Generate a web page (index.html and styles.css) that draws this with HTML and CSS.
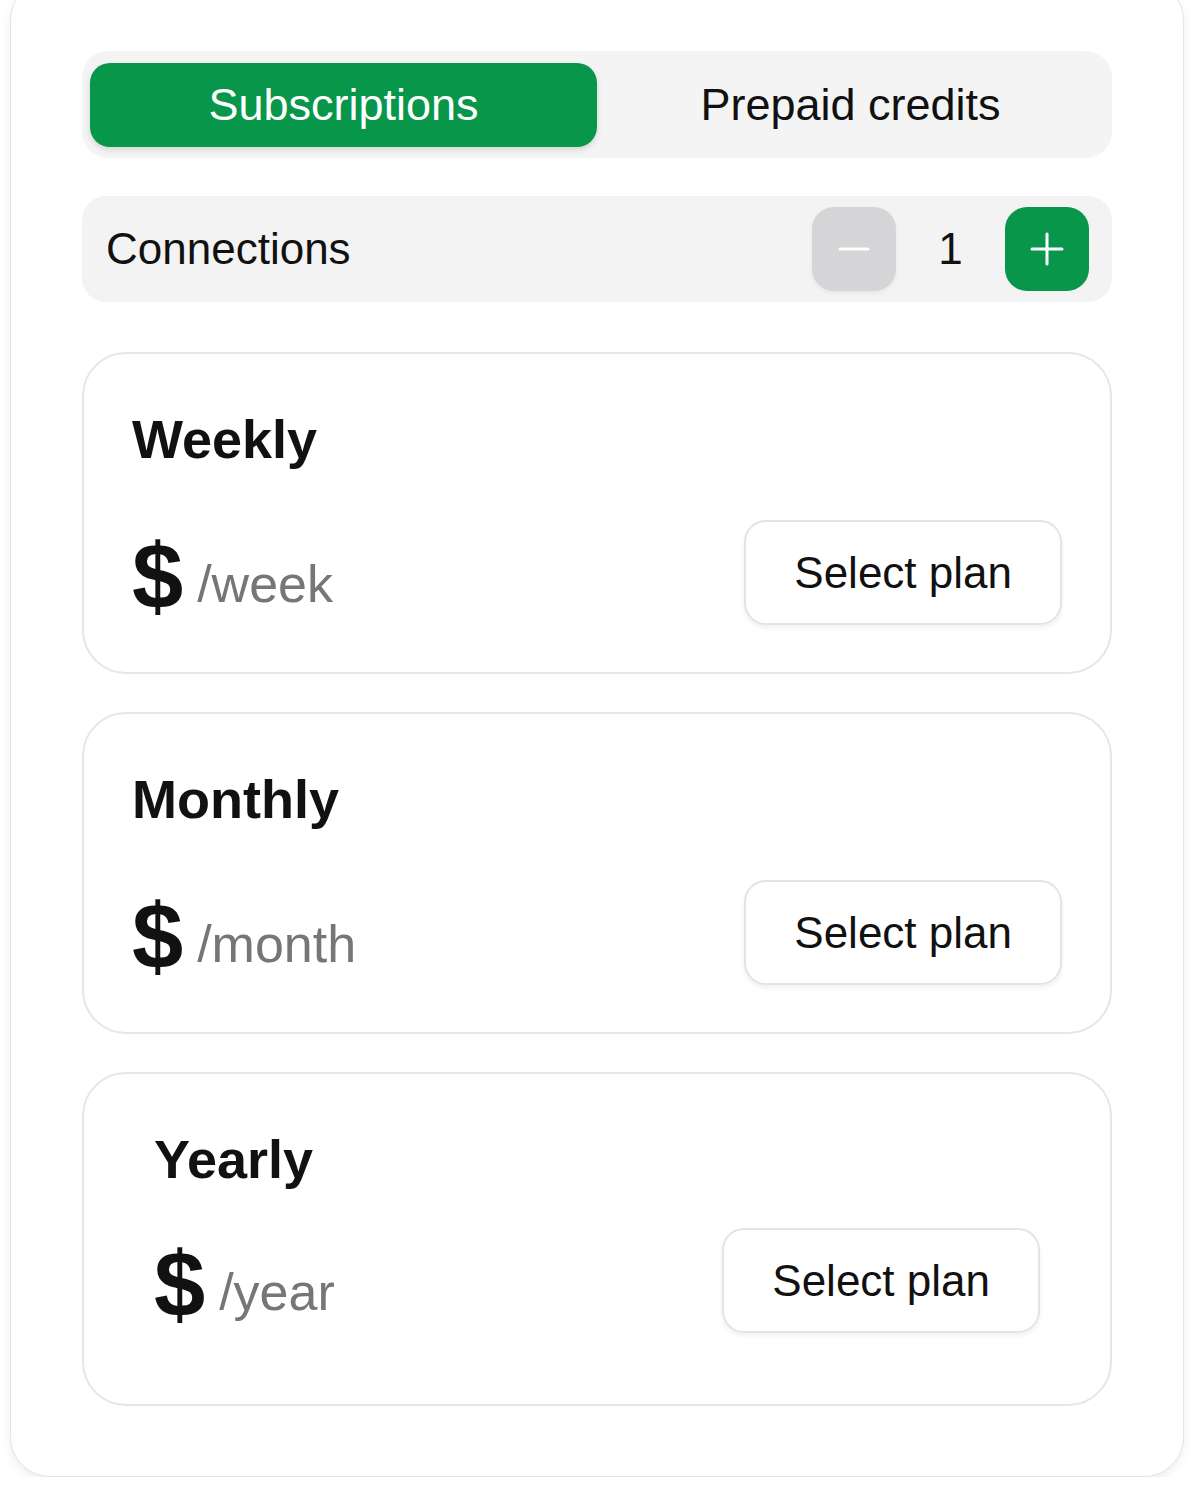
FILE: index.html
```html
<!DOCTYPE html>
<html lang="en">
<head>
    <meta charset="UTF-8">
    <meta name="viewport" content="width=device-width, initial-scale=1.0">
    <title>Plans</title>
    <link rel="stylesheet" href="styles.css">
</head>
<body>
    <div class="sheet">
        <div class="tabs">
            <button class="tab active">Subscriptions</button>
            <button class="tab">Prepaid credits</button>
        </div>

        <div class="connections">
            <span class="connections-label">Connections</span>
            <div class="stepper">
                <button class="step-btn minus" aria-label="Decrease">
                    <svg width="32" height="32" viewBox="0 0 32 32"><path d="M2 16h28" stroke="#fff" stroke-width="3" stroke-linecap="round"/></svg>
                </button>
                <span class="step-value">1</span>
                <button class="step-btn plus" aria-label="Increase">
                    <svg width="34" height="34" viewBox="0 0 34 34"><path d="M2 17h30M17 2v30" stroke="#fff" stroke-width="3" stroke-linecap="round"/></svg>
                </button>
            </div>
        </div>

        <div class="plan">
            <h2 class="plan-title">Weekly</h2>
            <div class="plan-row">
                <div class="price"><span class="currency">$</span><span class="period">/week</span></div>
                <button class="select-btn">Select plan</button>
            </div>
        </div>

        <div class="plan">
            <h2 class="plan-title">Monthly</h2>
            <div class="plan-row">
                <div class="price"><span class="currency">$</span><span class="period">/month</span></div>
                <button class="select-btn">Select plan</button>
            </div>
        </div>

        <div class="plan plan-wide">
            <h2 class="plan-title">Yearly</h2>
            <div class="plan-row">
                <div class="price"><span class="currency">$</span><span class="period">/year</span></div>
                <button class="select-btn">Select plan</button>
            </div>
        </div>
    </div>
</body>
</html>
```

FILE: styles.css
```css
body {
    font-family: "Liberation Sans", Arial, Helvetica, sans-serif;
    background-color: #ffffff;
    margin: 0;
    color: #111111;
}

button {
    font-family: inherit;
    cursor: pointer;
}

.sheet {
    margin: -20px 10px 0;
    padding: 70px 71px 70px 71px;
    background-color: #ffffff;
    border: 1px solid #e4e4e4;
    border-radius: 40px;
    box-shadow: 0 4px 10px rgba(0, 0, 0, 0.07);
    display: flex;
    flex-direction: column;
}

/* tabs */

.tabs {
    display: grid;
    grid-template-columns: 1fr 1fr;
    padding: 12px 8px 11px;
    background-color: #f4f4f4;
    border-radius: 26px;
}

.tab {
    height: 84px;
    border: none;
    background: transparent;
    font-size: 45px;
    color: #111111;
    border-radius: 20px;
    padding: 0;
}

.tab.active {
    background-color: #08974a;
    color: #ffffff;
    box-shadow: 0 3px 6px rgba(0, 0, 0, 0.12);
}

/* connections */

.connections {
    margin-top: 38px;
    display: flex;
    align-items: center;
    justify-content: space-between;
    padding: 11px 23px 11px 24px;
    background-color: #f3f3f3;
    border-radius: 24px;
}

.connections-label {
    font-size: 44px;
}

.stepper {
    display: flex;
    align-items: center;
}

.step-btn {
    width: 84px;
    height: 84px;
    border: none;
    border-radius: 22px;
    display: flex;
    align-items: center;
    justify-content: center;
    padding: 0;
}

.step-btn.minus {
    background-color: #d5d5d7;
    box-shadow: 0 2px 4px rgba(0, 0, 0, 0.06);
}

.step-btn.plus {
    background-color: #08974a;
}

.step-value {
    width: 109px;
    text-align: center;
    font-size: 44px;
}

/* plan cards */

.plan {
    margin-top: 38px;
    padding: 54px 48px 47px;
    border: 2px solid #e6e6e6;
    border-radius: 44px;
}

.connections + .plan {
    margin-top: 50px;
}

.plan-wide {
    padding: 54px 70px 71px;
}

.plan-title {
    margin: 0;
    font-size: 54px;
    line-height: 62px;
    font-weight: 700;
}

.plan-row {
    margin-top: 50px;
    display: flex;
    align-items: center;
    justify-content: space-between;
}

.plan-wide .plan-row {
    margin-top: 38px;
}

.price {
    display: flex;
    align-items: flex-end;
    padding-top: 6px;
}

.currency {
    font-size: 92px;
    font-weight: 700;
    line-height: 1;
}

.period {
    margin-left: 14px;
    padding-bottom: 12px;
    font-size: 52px;
    line-height: 1;
    color: #767676;
}

.select-btn {
    height: 105px;
    padding: 0 48px;
    background-color: #ffffff;
    border: 2px solid #e4e4e4;
    border-radius: 22px;
    font-size: 44px;
    color: #111111;
    box-shadow: 0 3px 5px rgba(0, 0, 0, 0.06);
}
```
